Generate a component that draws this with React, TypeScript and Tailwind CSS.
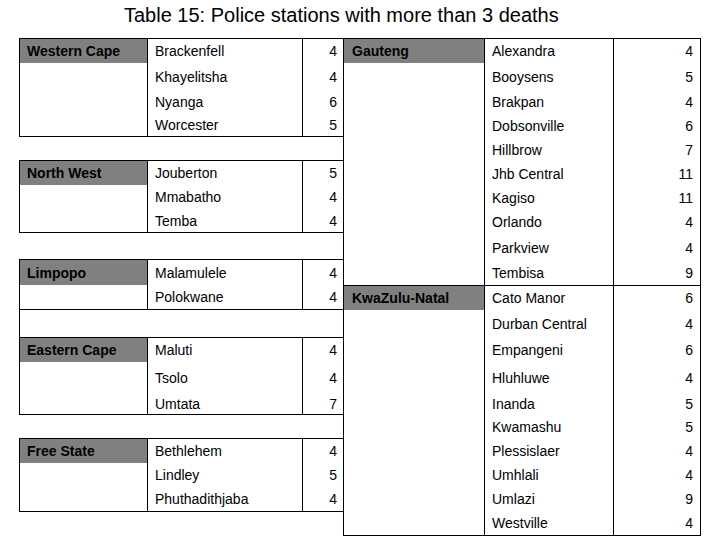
type Row = [string, number, number];

interface Block {
  kind: 'block';
  name: string;
  rows: Row[];
}

interface Gap {
  kind: 'gap';
  h: number;
  boxed?: boolean;
}

const leftTable: (Block | Gap)[] = [
  {
    kind: 'block',
    name: 'Western Cape',
    rows: [
      ['Brackenfell', 4, 24],
      ['Khayelitsha', 4, 27],
      ['Nyanga', 6, 24],
      ['Worcester', 5, 22],
    ],
  },
  { kind: 'gap', h: 23 },
  {
    kind: 'block',
    name: 'North West',
    rows: [
      ['Jouberton', 5, 24],
      ['Mmabatho', 4, 24],
      ['Temba', 4, 23],
    ],
  },
  { kind: 'gap', h: 26 },
  {
    kind: 'block',
    name: 'Limpopo',
    rows: [
      ['Malamulele', 4, 25],
      ['Polokwane', 4, 24],
    ],
  },
  { kind: 'gap', h: 27, boxed: true },
  {
    kind: 'block',
    name: 'Eastern Cape',
    rows: [
      ['Maluti', 4, 24],
      ['Tsolo', 4, 31],
      ['Umtata', 7, 21],
    ],
  },
  { kind: 'gap', h: 23 },
  {
    kind: 'block',
    name: 'Free State',
    rows: [
      ['Bethlehem', 4, 24],
      ['Lindley', 5, 24],
      ['Phuthadithjaba', 4, 24],
    ],
  },
];

const rightTable: Block[] = [
  {
    kind: 'block',
    name: 'Gauteng',
    rows: [
      ['Alexandra', 4, 24],
      ['Booysens', 5, 27],
      ['Brakpan', 4, 24],
      ['Dobsonville', 6, 24],
      ['Hillbrow', 7, 24],
      ['Jhb Central', 11, 24],
      ['Kagiso', 11, 24],
      ['Orlando', 4, 24],
      ['Parkview', 4, 27],
      ['Tembisa', 9, 24],
    ],
  },
  {
    kind: 'block',
    name: 'KwaZulu-Natal',
    rows: [
      ['Cato Manor', 6, 24],
      ['Durban Central', 4, 28],
      ['Empangeni', 6, 24],
      ['Hluhluwe', 4, 31],
      ['Inanda', 5, 21],
      ['Kwamashu', 5, 25],
      ['Plessislaer', 4, 24],
      ['Umhlali', 4, 24],
      ['Umlazi', 9, 24],
      ['Westville', 4, 24],
    ],
  },
];

const LeftBlock = ({ block }: { block: Block }) => (
  <div className="flex flex-col border-t border-b border-l border-black">
    {block.rows.map(([station, n, h], i) => (
      <div key={station} className="flex" style={{ height: h }}>
        <div
          className={`w-[128px] shrink-0 border-r border-black pl-[7px] flex items-center font-bold ${
            i === 0 ? 'bg-[#808080]' : ''
          }`}
        >
          {i === 0 ? block.name : ''}
        </div>
        <div className="w-[155px] shrink-0 border-r border-black pl-[7px] flex items-center">
          {station}
        </div>
        <div className="w-[40px] shrink-0 pr-[6px] flex items-center justify-end">{n}</div>
      </div>
    ))}
  </div>
);

const RightBlock = ({ block, first }: { block: Block; first: boolean }) => (
  <div className={`flex flex-col ${first ? '' : 'border-t border-black'}`}>
    {block.rows.map(([station, n, h], i) => (
      <div key={station} className="flex" style={{ height: h }}>
        <div
          className={`w-[141px] shrink-0 border-r border-black pl-[8px] flex items-center font-bold ${
            i === 0 ? 'bg-[#808080]' : ''
          }`}
        >
          {i === 0 ? block.name : ''}
        </div>
        <div className="w-[129px] shrink-0 border-r border-black pl-[7px] flex items-center">
          {station}
        </div>
        <div className="w-[86px] shrink-0 pr-[7px] flex items-center justify-end">{n}</div>
      </div>
    ))}
  </div>
);

export default function App() {
  return (
    <div className="w-[720px] h-[540px] bg-white text-black font-['Liberation_Sans',Arial,sans-serif] overflow-hidden">
      <div className="h-[38px] pl-[124px] pt-[3px] text-[20px] leading-[24px]">
        Table 15: Police stations with more than 3 deaths
      </div>
      <div className="flex pl-[19px] items-start text-[14px] leading-[16px]">
        <div className="w-[324px] shrink-0 flex flex-col">
          {leftTable.map((item, i) =>
            item.kind === 'block' ? (
              <LeftBlock key={i} block={item} />
            ) : (
              <div
                key={i}
                className={item.boxed ? 'border-l border-black' : ''}
                style={{ height: item.h }}
              />
            )
          )}
        </div>
        <div className="w-[358px] shrink-0 flex flex-col border border-black">
          {rightTable.map((block, i) => (
            <RightBlock key={block.name} block={block} first={i === 0} />
          ))}
        </div>
      </div>
    </div>
  );
}
